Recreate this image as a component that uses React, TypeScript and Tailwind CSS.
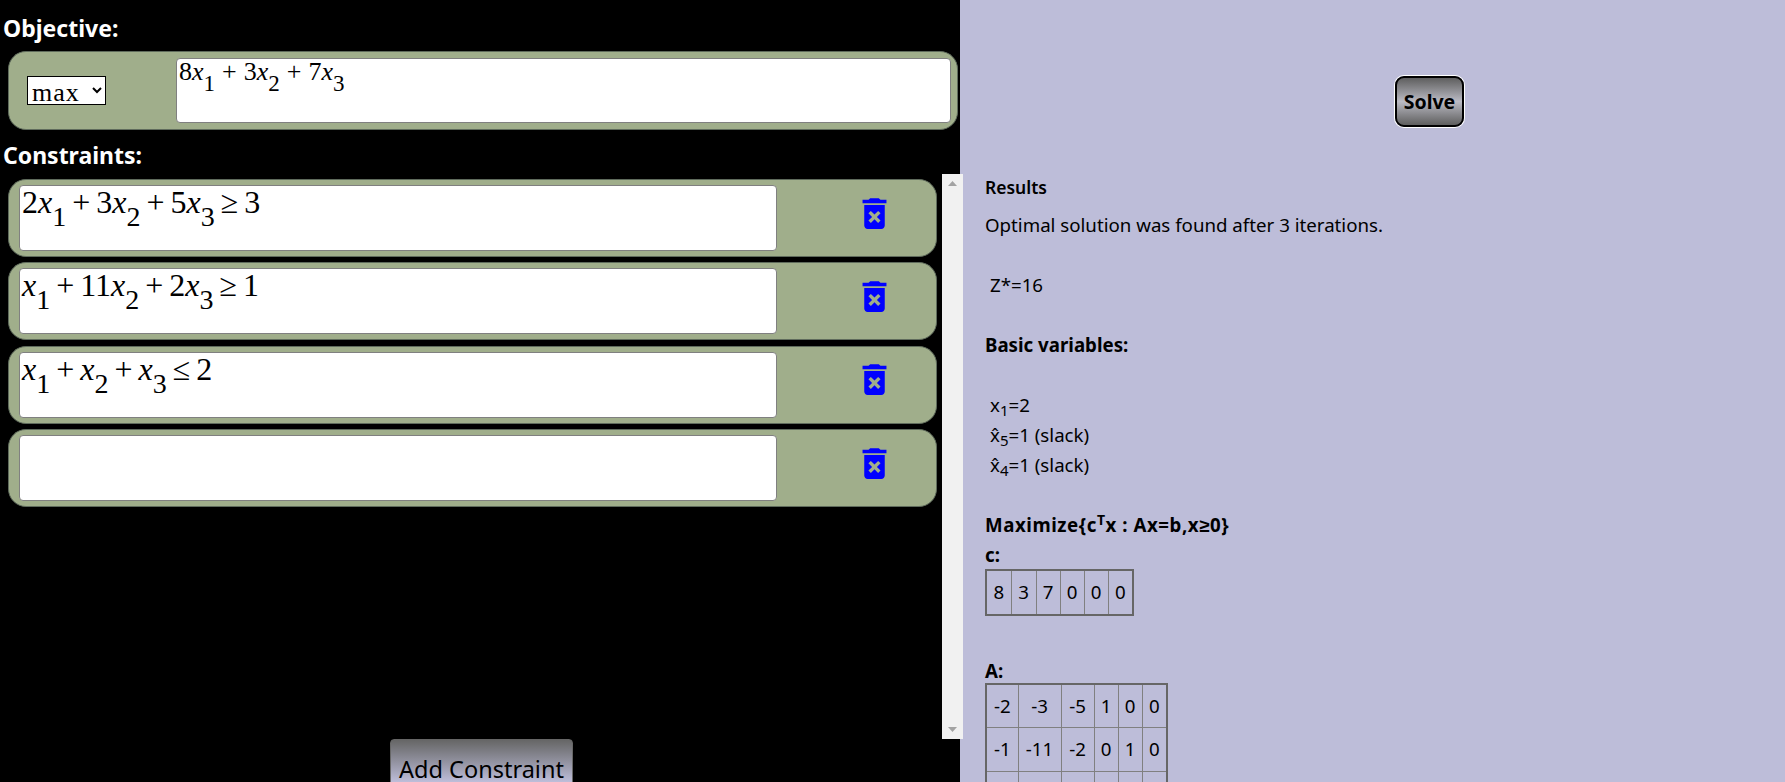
import { MdDeleteForever } from "react-icons/md";
import type { ReactNode } from "react";

const mathFont = "font-['Liberation_Serif',serif]";

const Term = ({ c, sub, big }: { c?: string; sub: string; big?: boolean }) => (
  <span>
    {c}
    <i>x</i>
    <span className={big ? "align-[-13px] text-[28px]" : "align-[-11px] text-[23px]"}>{sub}</span>
  </span>
);

const Op = ({ children, wide }: { children: ReactNode; wide?: boolean }) => (
  <span className={wide ? "mx-[7px]" : "mx-[6px]"}>{children}</span>
);

const MathLine = ({ children, big }: { children?: ReactNode; big?: boolean }) => (
  <div className={`${mathFont} whitespace-nowrap leading-none text-black ${big ? "pl-[2px] text-[32px]" : "pl-[2px] text-[26px]"}`}>
    {children}
  </div>
);

const Constraint = ({ children }: { children?: ReactNode }) => (
  <div className="flex h-[78px] items-center rounded-[18px] border border-[#5f6b5c] bg-[#a0ae8b] pl-[10px]">
    <div className="h-[66px] w-[758px] overflow-hidden rounded-[4px] border border-[#808080] bg-white">
      <MathLine big>{children}</MathLine>
    </div>
    <div className="flex flex-1 justify-center pb-[10px] pl-[35px]">
      <MdDeleteForever className="text-[41px] text-[#0000ff]" />
    </div>
  </div>
);

const Scrollbar = () => (
  <div className="flex h-[565px] w-[21px] flex-col items-center justify-between bg-[#f1f1f1] py-[7px]">
    <svg width="9" height="5" viewBox="0 0 9 5"><path d="M4.5 0 9 5H0z" fill="#a3a3a3" /></svg>
    <svg width="9" height="5" viewBox="0 0 9 5"><path d="M0 0h9L4.5 5z" fill="#a3a3a3" /></svg>
  </div>
);

const Grid = ({ rows, cols, cell }: { rows: (string | number)[][]; cols: string[]; cell: string }) => (
  <table className="table-fixed border-collapse border-2 border-[#666666] text-center">
    <colgroup>
      {cols.map((c, i) => (
        <col key={i} className={c} />
      ))}
    </colgroup>
    <tbody>
      {rows.map((r, i) => (
        <tr key={i}>
          {r.map((v, j) => (
            <td key={j} className={`${cell} border border-[#808080] p-0`}>{v}</td>
          ))}
        </tr>
      ))}
    </tbody>
  </table>
);

const Slack = ({ n, v }: { n: string; v: string }) => (
  <div className="h-[30px] pl-[5px] leading-[26px]">
    x̂<sub className="text-[15px]">{n}</sub>={v} (slack)
  </div>
);

export default function App() {
  return (
    <div className="flex h-[782px] overflow-hidden bg-[#bdbdd9] font-['Noto_Sans',sans-serif]">
      <div className="h-full w-[960px] shrink-0 bg-black">
        <h2 className="h-[51px] pl-[3px] pt-[12px] text-[23px] font-bold leading-[33px] text-white">Objective:</h2>
        <div className="ml-[8px] flex h-[79px] w-[950px] items-center rounded-[18px] border border-[#5f6b5c] bg-[#a0ae8b]">
          <div className="flex w-[167px] shrink-0 pl-[18px]">
            <select className={`${mathFont} h-[29px] w-[79px] border border-black bg-white text-[26px] leading-none tracking-[1px]`} defaultValue="max">
              <option value="max">max</option>
              <option value="min">min</option>
            </select>
          </div>
          <div className="h-[65px] w-[775px] overflow-hidden rounded-[4px] border border-[#808080] bg-white">
            <MathLine>
              <Term c="8" sub="1" /><Op wide>+</Op><Term c="3" sub="2" /><Op wide>+</Op><Term c="7" sub="3" />
            </MathLine>
          </div>
        </div>
        <h2 className="h-[44px] pl-[3px] pt-[9px] text-[23px] font-bold leading-[33px] text-white">Constraints:</h2>
        <div className="flex">
          <div className="ml-[8px] flex w-[929px] shrink-0 flex-col gap-[5.4px] pt-[5px]">
            <Constraint>
              <Term c="2" sub="1" big /><Op>+</Op><Term c="3" sub="2" big /><Op>+</Op><Term c="5" sub="3" big /><Op>≥</Op>3
            </Constraint>
            <Constraint>
              <Term sub="1" big /><Op>+</Op><Term c="11" sub="2" big /><Op>+</Op><Term c="2" sub="3" big /><Op>≥</Op>1
            </Constraint>
            <Constraint>
              <Term sub="1" big /><Op>+</Op><Term sub="2" big /><Op>+</Op><Term sub="3" big /><Op>≤</Op>2
            </Constraint>
            <Constraint />
          </div>
          <div className="ml-[5px] shrink-0">
            <Scrollbar />
          </div>
        </div>
        <button className="ml-[390px] h-[60px] w-[183px] whitespace-nowrap rounded-[4px] border border-[#666666] bg-gradient-to-b from-[#666666] to-[#bdbdd9] to-[72%] text-[23.5px] leading-[56px] text-black">
          Add Constraint
        </button>
      </div>

      <div className="min-w-0 flex-1 pl-[25px] text-[18.7px] text-black">
        <div className="h-[76px]" />
        <button className="ml-[410px] block h-[51px] w-[69px] rounded-[9px] border-2 border-black bg-gradient-to-b from-[#5f5f5f] via-[#bbbbc4] to-[#5f5f5f] text-[19.5px] font-bold shadow-[0_0_0_1px_#ffffff]">
          Solve
        </button>
        <div className="mt-[48px] h-[30px] text-[17.5px] font-semibold leading-[24px]">Results</div>
        <div className="mt-[7px] h-[30px] leading-[26px]">Optimal solution was found after 3 iterations.</div>
        <div className="mt-[30px] h-[30px] pl-[5px] leading-[26px]">Z*=16</div>
        <div className="mt-[30px] h-[30px] font-bold leading-[26px]">Basic variables:</div>
        <div className="mt-[30px] h-[30px] pl-[5px] leading-[26px]">x<sub className="text-[15px]">1</sub>=2</div>
        <Slack n="5" v="1" />
        <Slack n="4" v="1" />
        <div className="mt-[30px] h-[30px] font-bold leading-[26px] tracking-[0.55px]">Maximize{"{"}c<sup className="text-[14px]">T</sup>x : Ax=b,x≥0{"}"}</div>
        <div className="h-[13px] font-bold leading-[26px]">c:</div>
        <div className="mt-[14px]">
          <Grid
            rows={[[8, 3, 7, 0, 0, 0]]}
            cols={["w-[25px]", "w-[25px]", "w-[24px]", "w-[24px]", "w-[24px]", "w-[25px]"]}
            cell="h-[45px]"
          />
        </div>
        <div className="mt-[43px] h-[24px] font-bold leading-[24px]">A:</div>
        <Grid
          rows={[
            [-2, -3, -5, 1, 0, 0],
            [-1, -11, -2, 0, 1, 0],
            [1, 1, 1, 0, 0, 1],
          ]}
          cols={["w-[32px]", "w-[43px]", "w-[33px]", "w-[24px]", "w-[24px]", "w-[25px]"]}
          cell="h-[43.5px]"
        />
      </div>
    </div>
  );
}
